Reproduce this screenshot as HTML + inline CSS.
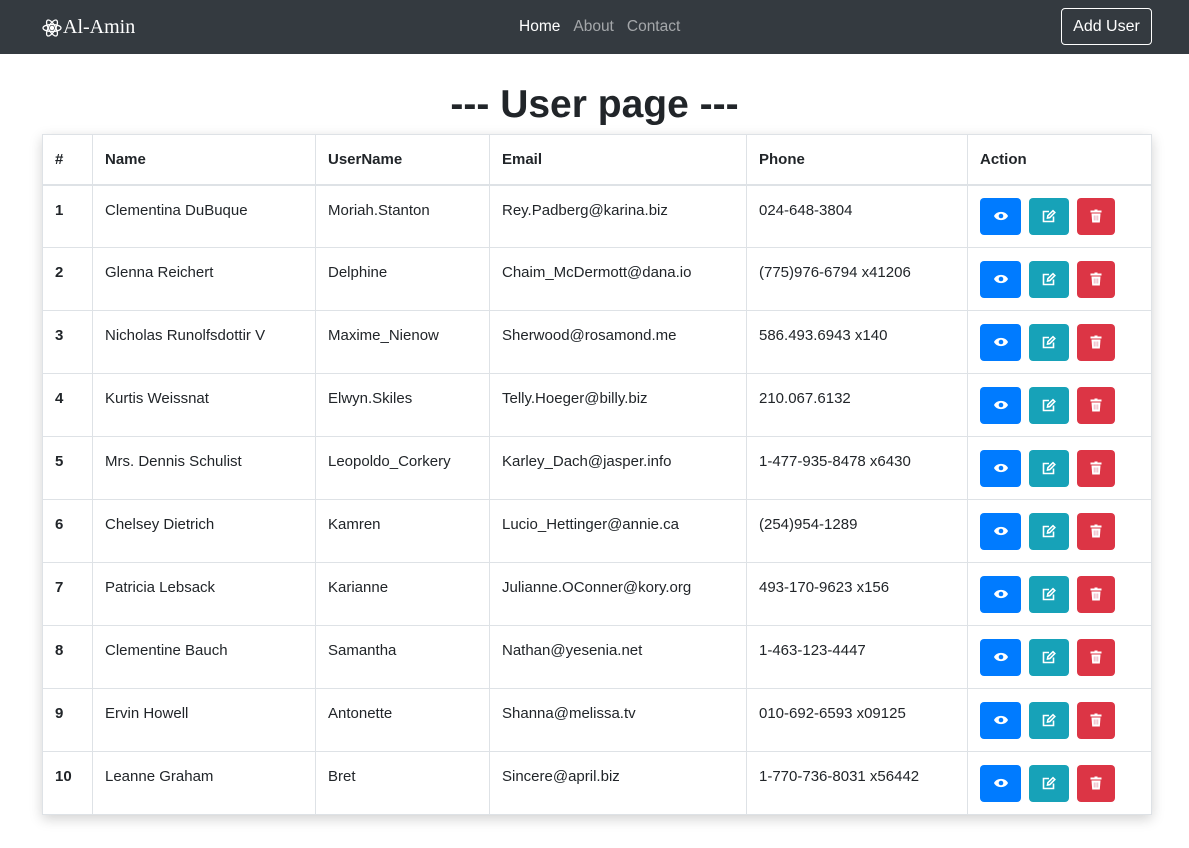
<!DOCTYPE html>
<html><head><meta charset="utf-8"><style>
*{box-sizing:border-box;margin:0;padding:0}
body{width:1189px;height:848px;background:#fff;font-family:"Liberation Sans","DejaVu Sans",sans-serif;color:#212529;font-size:15px;overflow:hidden}
nav{height:54px;background:#343a40;position:relative}
.brand{position:absolute;left:41px;top:16px;color:#fff;font-family:"Liberation Serif",serif;font-size:20px;display:flex;align-items:center}
.links{position:absolute;left:519px;top:18px;font-size:15.5px}
.links span{color:rgba(255,255,255,.55);margin-right:13px}
.links span.a{color:#fff}
.add{position:absolute;left:1061px;top:8px;width:91px;height:37px;border:1px solid #fff;border-radius:4px;color:#fff;font-size:16px;text-align:center;line-height:35px}
h1{text-align:center;font-size:39px;font-weight:bold;margin-top:28px;height:52px;line-height:46px}
table{position:absolute;left:42px;top:134px;width:1110px;border-collapse:collapse;box-shadow:0 4px 12px rgba(0,0,0,.18)}
td,th{border:1px solid #dee2e6;text-align:left;padding:0 12px;vertical-align:middle}
th{height:50px;font-weight:bold;border-bottom:2px solid #dee2e6}
td{height:63px;vertical-align:top;padding-top:16px}
td.act{vertical-align:middle;padding-top:0}
td:first-child{font-weight:bold}
.b{display:inline-block;height:37px;border-radius:4px;margin-right:8px;vertical-align:middle;position:relative}
.b svg{position:absolute;left:50%;top:50%;transform:translate(-50%,-50%)}
</style></head><body>
<nav><div class="brand"><svg width="22" height="22" viewBox="-11 -11 22 22" fill="none" stroke="#fff" stroke-width="1.3"><ellipse rx="9" ry="3.5"/><ellipse rx="9" ry="3.5" transform="rotate(60)"/><ellipse rx="9" ry="3.5" transform="rotate(120)"/><circle r="1.6" fill="#fff"/></svg>Al-Amin</div>
<div class="links"><span class="a">Home</span><span>About</span><span>Contact</span></div>
<div class="add">Add User</div></nav>
<h1>--- User page ---</h1>
<table>
<tr><th style="width:50px">#</th><th style="width:223px">Name</th><th style="width:174px">UserName</th><th style="width:257px">Email</th><th style="width:221px">Phone</th><th>Action</th></tr>
<tbody id="tb"></tbody>
</table>
<script>
var d=[["Clementina DuBuque","Moriah.Stanton","Rey.Padberg@karina.biz","024-648-3804"],["Glenna Reichert","Delphine","Chaim_McDermott@dana.io","(775)976-6794 x41206"],["Nicholas Runolfsdottir V","Maxime_Nienow","Sherwood@rosamond.me","586.493.6943 x140"],["Kurtis Weissnat","Elwyn.Skiles","Telly.Hoeger@billy.biz","210.067.6132"],["Mrs. Dennis Schulist","Leopoldo_Corkery","Karley_Dach@jasper.info","1-477-935-8478 x6430"],["Chelsey Dietrich","Kamren","Lucio_Hettinger@annie.ca","(254)954-1289"],["Patricia Lebsack","Karianne","Julianne.OConner@kory.org","493-170-9623 x156"],["Clementine Bauch","Samantha","Nathan@yesenia.net","1-463-123-4447"],["Ervin Howell","Antonette","Shanna@melissa.tv","010-692-6593 x09125"],["Leanne Graham","Bret","Sincere@april.biz","1-770-736-8031 x56442"]];
var eye='<svg width="15" height="11" viewBox="0 0 15 11"><path d="M0.5 5.5C3 0 12 0 14.5 5.5C12 11 3 11 0.5 5.5Z" fill="#fff"/><circle cx="7.5" cy="5.5" r="2.3" fill="#007bff"/></svg>';
var ed='<svg width="14" height="13" viewBox="0 0 14 13" fill="none" stroke="#fff" stroke-width="1.6"><path d="M7 2H1.5v10h10V7"/><path d="M5.5 8.5l.4-2.3L11 1.2l1.8 1.8-5 5.1z"/></svg>';
var tr='<svg width="11" height="13" viewBox="0 0 11 13"><rect x="0" y="1" width="11" height="2" fill="#fff"/><rect x="4" y="0" width="3" height="2" fill="#fff"/><path d="M1 4h9l-.7 9H1.7z" fill="#fff"/><path d="M3.7 6v5M5.5 6v5M7.3 6v5" stroke="#e8a0b0" stroke-width=".8"/></svg>';
var h='';d.forEach(function(r,i){h+='<tr><td>'+(i+1)+'</td><td>'+r[0]+'</td><td>'+r[1]+'</td><td>'+r[2]+'</td><td>'+r[3]+'</td><td class="act"><span class="b" style="width:41px;background:#007bff">'+eye+'</span><span class="b" style="width:40px;background:#17a2b8">'+ed+'</span><span class="b" style="width:38px;background:#dc3545">'+tr+'</span></td></tr>'});
document.getElementById('tb').innerHTML=h;
</script>
</body></html>
